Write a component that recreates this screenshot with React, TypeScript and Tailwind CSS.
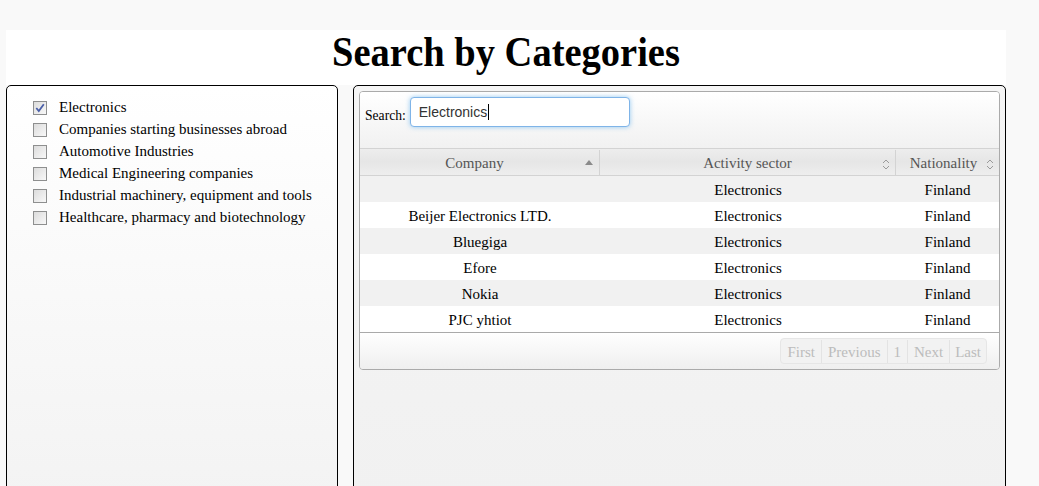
const categories = [
  { label: 'Electronics', checked: true },
  { label: 'Companies starting businesses abroad', checked: false },
  { label: 'Automotive Industries', checked: false },
  { label: 'Medical Engineering companies', checked: false },
  { label: 'Industrial machinery, equipment and tools', checked: false },
  { label: 'Healthcare, pharmacy and biotechnology', checked: false },
];

const rows = ['', 'Beijer Electronics LTD.', 'Bluegiga', 'Efore', 'Nokia', 'PJC yhtiot'];

function Checkbox({ checked }: { checked: boolean }) {
  return (
    <span className="mt-[3px] flex h-[14px] w-[14px] shrink-0 items-center justify-center border border-[#8e8f8f] bg-gradient-to-br from-[#dcdcdc] to-[#f8f8f8]">
      {checked && (
        <svg width="10" height="10" viewBox="0 0 10 10">
          <path d="M1.3 5 L3.8 8 L8.8 1.3" fill="none" stroke="#4a5fa8" strokeWidth="1.8" />
        </svg>
      )}
    </span>
  );
}

function SortBoth() {
  return (
    <svg width="8" height="11" viewBox="0 0 8 11" className="absolute right-[5px] top-[9px]">
      <path d="M1 4 L4 1 L7 4 M1 7 L4 10 L7 7" fill="none" stroke="#9a9a9a" strokeWidth="1" />
    </svg>
  );
}

export default function App() {
  return (
    <div className="min-h-[486px] bg-[#f9f9f9] pt-[30px] pl-[6px] font-['Liberation_Serif',serif] text-black">
      <div className="w-[1000px]">
        <div className="flex h-[55px] justify-center bg-white pt-[2px]">
          <h1 className="scale-y-[1.08] text-[38.5px] font-bold leading-[40px]">Search by Categories</h1>
        </div>

        <div className="flex gap-[15px]">
          <div className="h-[420px] w-[332px] rounded-[5px] border border-black bg-gradient-to-b from-white to-[#f3f3f3] pl-[26px] pt-[12px]">
            {categories.map((c) => (
              <div key={c.label} className="flex h-[22px] items-start gap-[12px] text-[15px] leading-[19px]">
                <Checkbox checked={c.checked} />
                <span>{c.label}</span>
              </div>
            ))}
          </div>

          <div className="h-[420px] w-[653px] rounded-[5px] border border-black bg-gradient-to-b from-[#f5f5f5] to-[#f1f1f1] p-[5px]">
            <div className="overflow-hidden rounded-[4px] border border-[#aaaaaa]">
              <div className="flex h-[56px] items-start bg-gradient-to-b from-white to-[#f1f1f1] pl-[5px] pt-[5px]">
                <span className="mt-[9px] text-[13.6px]">Search:</span>
                <div className="ml-[4px] flex h-[30px] w-[220px] items-center rounded-[4px] border border-[#7fb4e8] bg-white pl-[8px] font-['Liberation_Sans',sans-serif] text-[14px] text-[#333] shadow-[0_0_5px_rgba(82,168,236,0.6)]">
                  Electronics<span className="ml-[1px] h-[16px] w-px bg-black" />
                </div>
              </div>

              <div className="flex h-[28px] border-t border-b border-[#d3d3d3] bg-gradient-to-b from-[#ededed] via-[#e6e6e6] to-[#eeeeee] pt-[1px] text-[15px] leading-[27px] text-[#555]">
                <div className="relative w-[240px] border-r border-[#d3d3d3] text-center">
                  <span className="mr-[10px]">Company</span>
                  <svg width="8" height="5" viewBox="0 0 8 5" className="absolute right-[6px] top-[10px]">
                    <path d="M0 5 L4 0 L8 5 Z" fill="#8a8a8a" />
                  </svg>
                </div>
                <div className="relative w-[296px] border-r border-[#d3d3d3] text-center">
                  Activity sector
                  <SortBoth />
                </div>
                <div className="relative flex-1 text-center">
                  <span className="mr-[8px]">Nationality</span>
                  <SortBoth />
                </div>
              </div>

              {rows.map((name, i) => (
                <div
                  key={i}
                  className={`flex h-[26px] items-center pt-[2px] text-[15px] ${i % 2 === 0 ? 'bg-[#f1f1f1]' : 'bg-white'}`}
                >
                  <div className="w-[240px] text-center">{name}</div>
                  <div className="w-[296px] text-center">Electronics</div>
                  <div className="flex-1 text-center">Finland</div>
                </div>
              ))}

              <div className="flex h-[37px] items-center justify-end border-t border-[#aaaaaa] bg-gradient-to-b from-white to-[#efefef] pr-[12px]">
                <div className="flex h-[26px] overflow-hidden rounded-[4px] border border-[#e6e6e6] bg-[#f2f2f2] pt-[1px] text-[15px] leading-[24px] text-[#bcbcbc]">
                  <span className="border-r border-[#e3e3e3] px-[6px]">First</span>
                  <span className="border-r border-[#e3e3e3] px-[6px]">Previous</span>
                  <span className="border-r border-[#e3e3e3] px-[6px]">1</span>
                  <span className="border-r border-[#e3e3e3] px-[6px]">Next</span>
                  <span className="px-[5px]">Last</span>
                </div>
              </div>
            </div>
          </div>
        </div>
      </div>
    </div>
  );
}
